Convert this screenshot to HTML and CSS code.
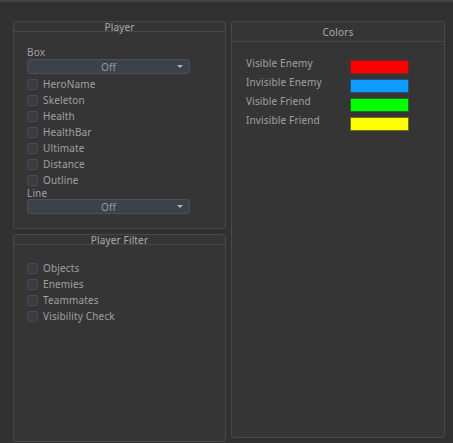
FILE: index.html
```html
<!DOCTYPE html>
<html lang="en">
<head>
    <meta charset="UTF-8">
    <meta name="viewport" content="width=device-width, initial-scale=1.0">
    <title>Visuals</title>
    <link rel="stylesheet" href="styles.css">
</head>
<body>
    <div class="window">
        <div class="column">
            <!-- Player ESP options -->
            <div class="group group-player">
                <div class="group-title">Player</div>
                <div class="group-body">
                    <div class="field-label">Box</div>
                    <div class="combo"><span>Off</span><span class="arrow"></span></div>
                    <label class="check"><span class="box"></span>HeroName</label>
                    <label class="check"><span class="box"></span>Skeleton</label>
                    <label class="check"><span class="box"></span>Health</label>
                    <label class="check"><span class="box"></span>HealthBar</label>
                    <label class="check"><span class="box"></span>Ultimate</label>
                    <label class="check"><span class="box"></span>Distance</label>
                    <label class="check"><span class="box"></span>Outline</label>
                    <div class="field-label line-label">Line</div>
                    <div class="combo"><span>Off</span><span class="arrow"></span></div>
                </div>
            </div>

            <!-- Which entities get drawn -->
            <div class="group group-filter">
                <div class="group-title">Player Filter</div>
                <div class="group-body filter-body">
                    <label class="check"><span class="box"></span>Objects</label>
                    <label class="check"><span class="box"></span>Enemies</label>
                    <label class="check"><span class="box"></span>Teammates</label>
                    <label class="check"><span class="box"></span>Visibility Check</label>
                </div>
            </div>
        </div>

        <div class="column">
            <div class="group group-colors">
                <div class="group-title colors-title">Colors</div>
                <div class="group-body colors-body">
                    <div class="color-row"><span class="color-name">Visible Enemy</span><span class="swatch red"></span></div>
                    <div class="color-row"><span class="color-name">Invisible Enemy</span><span class="swatch blue"></span></div>
                    <div class="color-row"><span class="color-name">Visible Friend</span><span class="swatch green"></span></div>
                    <div class="color-row"><span class="color-name">Invisible Friend</span><span class="swatch yellow"></span></div>
                </div>
            </div>
        </div>
    </div>
</body>
</html>
```

FILE: styles.css
```css
/* Dark overlay menu */
body {
    margin: 0;
    height: 443px;
    box-sizing: border-box;
    background-color: #323132;
    border-top: 2px solid #454445;
    font-family: "Noto Sans", sans-serif;
    font-size: 10px;
    letter-spacing: 0.15px;
    color: #a0a0a0;
    overflow: hidden;
}
.window {
    display: flex;
    gap: 5px;
    padding: 19px 8px 0 13px;
}
.column {
    display: flex;
    flex-direction: column;
    gap: 5px;
}
.group {
    width: 211px;
    display: flex;
    flex-direction: column;
    background-color: #363536;
    border: 1px solid #4a494a;
    border-radius: 3px;
}
.group-player {
    height: 206px;
}
.group-filter {
    height: 206px;
}
.group-colors {
    width: 212px;
    height: 415px;
}
.group-title {
    height: 9px;
    line-height: 10px;
    text-align: center;
    color: #aaaaaa;
    border-bottom: 1px solid #4a494a;
}
.colors-title {
    height: 19px;
    line-height: 20px;
}
.group-body {
    flex: 1;
    display: flex;
    flex-direction: column;
    align-items: flex-start;
    padding: 13px 13px 0 13px;
}
.filter-body {
    padding-top: 15px;
}
.field-label {
    line-height: 14px;
}
.line-label {
    line-height: 12px;
    margin-top: -1px;
}
.combo {
    width: 161px;
    height: 13px;
    display: flex;
    align-items: center;
    justify-content: center;
    position: relative;
    background-color: #3d414b;
    border: 1px solid #4b4f59;
    border-radius: 3px;
    color: #999999;
}
.combo .arrow {
    position: absolute;
    right: 6px;
    top: 5px;
    border-left: 3px solid transparent;
    border-right: 3px solid transparent;
    border-top: 3px solid #b8b8bc;
}
.check {
    display: flex;
    align-items: center;
    gap: 5px;
    height: 16px;
}
.group-player .combo + .check {
    margin-top: 2px;
}
.check .box {
    width: 9px;
    height: 9px;
    background-color: #3a3c42;
    border: 1px solid #474a52;
    border-radius: 2px;
}
.colors-body {
    padding: 18px 14px 0 14px;
    gap: 5px;
}
.color-row {
    display: flex;
    height: 14px;
}
.color-name {
    width: 104px;
    line-height: 14px;
    margin-top: -4px;
}
.swatch {
    width: 57px;
    height: 12px;
    border: 1px solid #555;
}
.red { background-color: #ff0000; border-color: #7a2020; }
.blue { background-color: #0e9bff; border-color: #24507a; }
.green { background-color: #00ff00; border-color: #207020; }
.yellow { background-color: #ffff00; border-color: #707020; }
```
